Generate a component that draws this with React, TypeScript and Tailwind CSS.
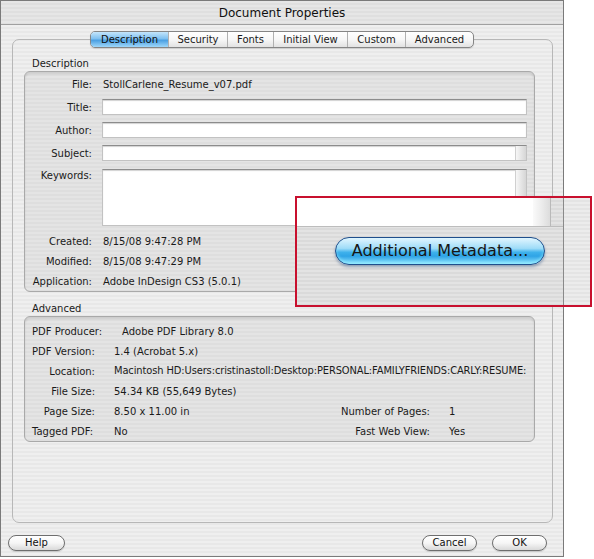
import React from "react";

const stripeOuter =
  "bg-[repeating-linear-gradient(180deg,#efefef_0px,#efefef_2px,#e8e8e8_2px,#e8e8e8_4px)]";

function Field({ h, stub }: { h: string; stub?: boolean }) {
  return (
    <div
      className={`${h} w-[425px] flex bg-white border border-[#c2c2c2] border-t-[#8c8c8c] shadow-[inset_0_1px_1px_rgba(0,0,0,0.18)]`}
    >
      <div className="flex-1" />
      {stub ? (
        <div className="w-[11px] bg-gradient-to-r from-[#f7f7f7] via-[#e6e6e6] to-[#d6d6d6] border-l border-[#d0d0d0]" />
      ) : null}
    </div>
  );
}

function DescRow({ label, children }: { label: string; children: React.ReactNode }) {
  return (
    <div className="flex items-center gap-[10px] h-[20px]">
      <div className="w-[67px] text-right whitespace-nowrap">{label}</div>
      <div className="pl-[1px] whitespace-nowrap">{children}</div>
    </div>
  );
}

function AdvRow({
  label,
  value,
  left,
  extra,
  rLabel,
  rValue,
  small,
}: {
  label: string;
  value: string;
  left?: boolean;
  extra?: boolean;
  rLabel?: string;
  rValue?: string;
  small?: boolean;
}) {
  return (
    <div className="flex items-center h-[20px] pl-[7px]">
      <div className={`w-[63px] whitespace-nowrap ${left ? "text-left" : "text-right"}`}>{label}</div>
      <div
        className={`ml-[19px] w-[226px] whitespace-nowrap ${extra ? "pl-[8px]" : ""} ${
          small ? "text-[9.9px] tracking-[-0.1px]" : ""
        }`}
      >
        {value}
      </div>
      {rLabel ? (
        <>
          <div className="w-[90px] text-right whitespace-nowrap">{rLabel}</div>
          <div className="ml-[19px] whitespace-nowrap">{rValue}</div>
        </>
      ) : null}
    </div>
  );
}

function PillButton({ label, w }: { label: string; w: string }) {
  return (
    <div
      className={`${w} h-[16px] rounded-full border border-[#6e6e6e] bg-gradient-to-b from-white via-[#f6f6f6] to-[#d9d9d9] shadow-[0_1px_1px_rgba(0,0,0,0.15)] flex items-center justify-center text-[10px] leading-[14px] text-[#111]`}
    >
      {label}
    </div>
  );
}

export default function App() {
  const tabs: { name: string; w: string; active?: boolean }[] = [
    { name: "Description", w: "w-[77px]", active: true },
    { name: "Security", w: "w-[59px]" },
    { name: "Fonts", w: "w-[46px]" },
    { name: "Initial View", w: "w-[74px]" },
    { name: "Custom", w: "w-[58px]" },
    { name: "Advanced", w: "w-[68px]" },
  ];

  return (
    <div className="relative w-[594px] h-[559px] bg-white font-['DejaVu_Sans',sans-serif] text-[10px] text-[#1a1a1a] overflow-hidden">
      {/* Window */}
      <div className={`w-[564px] h-[557px] border border-[#7a7a7a] flex flex-col ${stripeOuter}`}>
        {/* Title bar */}
        <div className="h-[24px] border-b border-[#a0a0a0] bg-[repeating-linear-gradient(180deg,#e6e6e6_0px,#e6e6e6_2px,#dfdfdf_2px,#dfdfdf_4px)] flex items-center justify-center text-[12px] text-[#111]">
          Document Properties
        </div>

        {/* Tabs */}
        <div className="mt-[6px] flex justify-center relative z-10">
          <div className="flex border border-[#858585] rounded-[5px] overflow-hidden bg-gradient-to-b from-white via-[#f7f7f7] to-[#e2e2e2] shadow-[0_1px_1px_rgba(0,0,0,0.12)]">
            {tabs.map((t, i) => (
              <div
                key={t.name}
                className={`${t.w} h-[15px] leading-[15px] text-center whitespace-nowrap ${
                  i > 0 ? "border-l border-[#b0b0b0]" : ""
                } ${
                  t.active
                    ? "bg-[linear-gradient(180deg,#c4e5fb_0%,#7fc0f0_45%,#4a9fe2_55%,#9fd8fa_100%)] text-[#0d0d0d]"
                    : ""
                }`}
              >
                {t.name}
              </div>
            ))}
          </div>
        </div>

        {/* Tab panel */}
        <div className="-mt-[9px] ml-[11px] w-[541px] h-[484px] border border-[#b7b7b7] rounded-[7px] pt-[17px] flex flex-col">
          <div className="pl-[19px] h-[14px] leading-[14px]">Description</div>
          <div className="ml-[11px] w-[511px] h-[221px] border border-[#a9a9a9] rounded-[6px] bg-[repeating-linear-gradient(180deg,#e4e4e4_0px,#e4e4e4_2px,#dedede_2px,#dedede_4px)] shadow-[inset_0_2px_2px_rgba(0,0,0,0.10)] pt-[2px] flex flex-col">
            <DescRow label="File:">StollCarlene_Resume_v07.pdf</DescRow>
            <div className="mt-[5px] flex items-center gap-[10px]">
              <div className="w-[67px] text-right">Title:</div>
              <Field h="h-[16px]" />
            </div>
            <div className="mt-[7px] flex items-center gap-[10px]">
              <div className="w-[67px] text-right">Author:</div>
              <Field h="h-[16px]" />
            </div>
            <div className="mt-[7px] flex items-center gap-[10px]">
              <div className="w-[67px] text-right">Subject:</div>
              <Field h="h-[16px]" stub />
            </div>
            <div className="mt-[8px] flex items-start gap-[10px]">
              <div className="w-[67px] text-right leading-[14px]">Keywords:</div>
              <Field h="h-[57px]" stub />
            </div>
            <div className="mt-[5px]">
              <DescRow label="Created:">8/15/08 9:47:28 PM</DescRow>
              <DescRow label="Modified:">8/15/08 9:47:29 PM</DescRow>
              <DescRow label="Application:">Adobe InDesign CS3 (5.0.1)</DescRow>
            </div>
          </div>

          <div className="mt-[10px] pl-[19px] h-[14px] leading-[14px]">Advanced</div>
          <div className="ml-[11px] w-[511px] h-[126px] border border-[#a9a9a9] rounded-[6px] bg-[repeating-linear-gradient(180deg,#e4e4e4_0px,#e4e4e4_2px,#dedede_2px,#dedede_4px)] shadow-[inset_0_2px_2px_rgba(0,0,0,0.10)] pt-[4px] flex flex-col">
            <AdvRow label="PDF Producer:" value="Adobe PDF Library 8.0" left extra />
            <AdvRow label="PDF Version:" value="1.4 (Acrobat 5.x)" left />
            <AdvRow
              label="Location:"
              value="Macintosh HD:Users:cristinastoll:Desktop:PERSONAL:FAMILYFRIENDS:CARLY:RESUME:"
              small
            />
            <AdvRow label="File Size:" value="54.34 KB (55,649 Bytes)" />
            <AdvRow label="Page Size:" value="8.50 x 11.00 in" rLabel="Number of Pages:" rValue="1" />
            <AdvRow label="Tagged PDF:" value="No" left rLabel="Fast Web View:" rValue="Yes" />
          </div>
        </div>

        {/* Bottom buttons */}
        <div className="mt-[12px] flex items-center pl-[7px] pr-[16px]">
          <PillButton label="Help" w="w-[57px]" />
          <div className="flex-1" />
          <PillButton label="Cancel" w="w-[55px]" />
          <div className="w-[15px]" />
          <PillButton label="OK" w="w-[55px]" />
        </div>
      </div>

      {/* Callout overlay (magnified) */}
      <div className="absolute left-[295px] top-[196px] w-[297px] h-[111px] border-2 border-[#c8102e] bg-[repeating-linear-gradient(180deg,#e3e3e3_0px,#e3e3e3_2px,#dadada_2px,#dadada_4px)] flex">
        <div className="w-[266px] flex flex-col">
          <div className="h-[29px] flex border-b border-[#bdbdbd]">
            <div className="w-[236px] bg-white" />
            <div className="w-[17px] bg-gradient-to-r from-[#fafafa] via-[#ececec] to-[#dcdcdc]" />
            <div className="w-[1px] bg-[#b9b9b9]" />
            <div className="flex-1" />
          </div>
          <div className="mt-[10px] ml-[38px] w-[210px] h-[28px] rounded-full border border-[#1f4f8c] bg-[linear-gradient(180deg,#e2f6ff_0%,#9edcf8_40%,#3eb1ec_55%,#2fa4e6_70%,#8ee2ff_100%)] shadow-[0_2px_3px_rgba(0,50,110,0.35),inset_0_-2px_3px_rgba(150,240,255,0.6)] flex items-center justify-center text-[16px] text-[#161616]">
            Additional Metadata...
          </div>
        </div>
        <div className="w-[1px] bg-[#8a8a8a]" />
        <div className="flex-1 bg-[repeating-linear-gradient(180deg,#ececec_0px,#ececec_2px,#e4e4e4_2px,#e4e4e4_4px)]" />
      </div>
    </div>
  );
}
